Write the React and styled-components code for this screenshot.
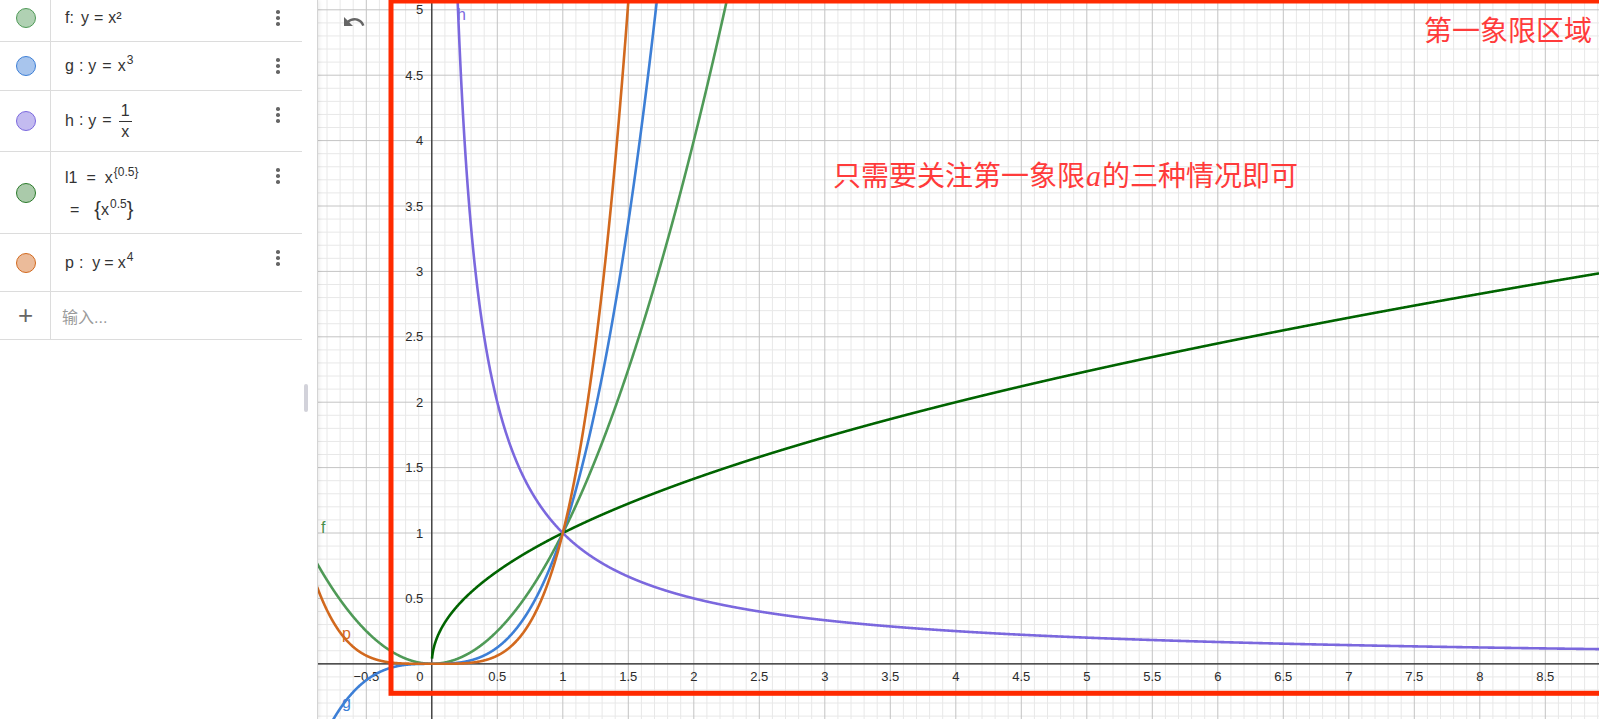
import React from 'react';
import styled, { createGlobalStyle } from 'styled-components';

const GlobalStyle = createGlobalStyle`
  html, body {
    margin: 0;
    padding: 0;
    height: 100%;
    overflow: hidden;
    background: #fff;
  }
  body {
    font-family: "Liberation Sans", "Noto Sans CJK SC", sans-serif;
    color: #333;
  }
  #root {
    height: 100%;
  }
`;

// graph view constants (px inside the graphics panel)
const W = 1282;
const H = 719;
const OX = 114.8;
const OY = 663.8;
const UX = 131;
const UY = 130.8;

const toPx = (x) => OX + x * UX;
const toPy = (y) => OY - y * UY;

const functions = [
  { id: 'f', color: '#4f9a57', fn: (x) => x * x },
  { id: 'l1', color: '#006400', fn: (x) => (x >= 0 ? Math.sqrt(x) : NaN) },
  { id: 'h', color: '#7b68de', fn: (x) => (x > 0 ? 1 / x : NaN) },
  { id: 'g', color: '#3d7fd6', fn: (x) => x * x * x },
  { id: 'p', color: '#d2691e', fn: (x) => x * x * x * x },
];

function buildPath(fn) {
  let d = '';
  let pen = false;
  for (let px = 0; px <= W; px += 0.25) {
    const x = (px - OX) / UX;
    let y = fn(x);
    if (!isFinite(y)) {
      pen = false;
      continue;
    }
    y = Math.max(-2, Math.min(7, y));
    d += `${pen ? 'L' : 'M'}${px.toFixed(2)} ${toPy(y).toFixed(2)} `;
    pen = true;
  }
  return d;
}

function gridLines() {
  const lines = [];
  const kx0 = Math.ceil(((0 - OX) / UX) * 10);
  const kx1 = Math.floor(((W - OX) / UX) * 10);
  for (let k = kx0; k <= kx1; k++) {
    const px = toPx(k / 10);
    lines.push({ key: 'x' + k, major: k % 5 === 0, x1: px, y1: 0, x2: px, y2: H });
  }
  const ky0 = Math.ceil(((OY - H) / UY) * 10);
  const ky1 = Math.floor((OY / UY) * 10);
  for (let k = ky0; k <= ky1; k++) {
    const py = toPy(k / 10);
    lines.push({ key: 'y' + k, major: k % 5 === 0, x1: 0, y1: py, x2: W, y2: py });
  }
  return lines;
}

const fmt = (v) => (v < 0 ? '\u2212' + String(-v) : String(v));

const xTicks = [];
for (let k = -1; k <= 17; k++) if (k !== 0) xTicks.push(k / 2);
const yTicks = [];
for (let k = 1; k <= 10; k++) yTicks.push(k / 2);

const rows = [
  { id: 'f', h: 48, color: '#4f9a57', fill: 'rgba(79,154,87,0.45)' },
  { id: 'g', h: 49, color: '#3d7fd6', fill: 'rgba(61,127,214,0.45)' },
  { id: 'h', h: 61, color: '#7b68de', fill: 'rgba(123,104,222,0.45)' },
  { id: 'l1', h: 82, color: '#2a7a2a', fill: 'rgba(42,122,42,0.4)' },
  { id: 'p', h: 58, color: '#d2691e', fill: 'rgba(210,105,30,0.45)' },
];

export default function App() {
  const grid = gridLines();
  return (
    <Layout>
      <GlobalStyle />
      <AlgebraPanel>
        <List>
          {rows.map((r) => (
            <Row key={r.id} h={r.h}>
              <MarbleCell>
                <Marble color={r.color} fill={r.fill} />
              </MarbleCell>
              <Content>{renderFormula(r.id)}</Content>
              <MenuButton>
                <Dot />
                <Dot />
                <Dot />
              </MenuButton>
            </Row>
          ))}
          <Row h={48}>
            <MarbleCell>
              <Plus>+</Plus>
            </MarbleCell>
            <Content>
              <Placeholder>输入...</Placeholder>
            </Content>
          </Row>
        </List>
        <DragHandle />
      </AlgebraPanel>

      <GraphPanel>
        <svg width={W} height={H} viewBox={`0 0 ${W} ${H}`}>
          <g>
            {grid
              .filter((l) => !l.major)
              .map((l) => (
                <line key={l.key} x1={l.x1} y1={l.y1} x2={l.x2} y2={l.y2} stroke="#e8e8e8" strokeWidth="1" />
              ))}
            {grid
              .filter((l) => l.major)
              .map((l) => (
                <line key={l.key} x1={l.x1} y1={l.y1} x2={l.x2} y2={l.y2} stroke="#c4c4c4" strokeWidth="1" />
              ))}
          </g>
          <line x1="0" y1={OY} x2={W} y2={OY} stroke="#252525" strokeWidth="1.2" />
          <line x1={OX} y1="0" x2={OX} y2={H} stroke="#252525" strokeWidth="1.2" />

          <g fontFamily="Liberation Sans, sans-serif" fontSize="13" fill="#2b2b2b">
            {xTicks.map((v) => (
              <text key={'xt' + v} x={toPx(v)} y={OY + 17} textAnchor="middle">
                {fmt(v)}
              </text>
            ))}
            <text x={OX - 12} y={OY + 17} textAnchor="middle">0</text>
            {yTicks.map((v) => (
              <text key={'yt' + v} x={OX - 8.5} y={toPy(v) + 4.6} textAnchor="end">
                {fmt(v)}
              </text>
            ))}
          </g>

          {functions.map((f) => (
            <path key={f.id} d={buildPath(f.fn)} fill="none" stroke={f.color} strokeWidth="2.6" strokeLinejoin="round" />
          ))}

          <g fontFamily="Liberation Sans, sans-serif" fontSize="16">
            <text x={140} y={20} fill="#7b68de">h</text>
            <text x={4} y={533} fill="#4a8f4a">f</text>
            <text x={25} y={639} fill="#d2691e">p</text>
            <text x={25} y={708} fill="#3d7fd6">g</text>
          </g>

          <rect x={74} y={1} width={2000} height={692.3} fill="none" stroke="#ff2a00" strokeWidth="5" />
        </svg>

        <UndoButton aria-label="undo">
          <svg width="24" height="24" viewBox="0 0 24 24">
            <path
              fill="#666"
              d="M12.5 8c-2.65 0-5.05.99-6.9 2.6L2 7v9h9l-3.62-3.62c1.39-1.16 3.16-1.88 5.12-1.88 3.54 0 6.55 2.31 7.6 5.5l2.37-.78C21.08 11.03 17.15 8 12.5 8z"
            />
          </svg>
        </UndoButton>

        <Note x={516} y={160}>
          只需要关注第一象限<MathA>a</MathA>的三种情况即可
        </Note>
        <Note x={1107} y={15}>第一象限区域</Note>
      </GraphPanel>
    </Layout>
  );
}

function renderFormula(id) {
  switch (id) {
    case 'f':
      return (
        <Formula>
          f:<Op l={7} r={0}>y</Op><Op l={5} r={5}>=</Op>x²
        </Formula>
      );
    case 'g':
      return (
        <Formula>
          g<Op l={5} r={5}>:</Op>y<Op l={6} r={6}>=</Op>x<sup>3</sup>
        </Formula>
      );
    case 'h':
      return (
        <Formula>
          h<Op l={5} r={5}>:</Op>y<Op l={6} r={6}>=</Op>
          <Frac>
            <span>1</span>
            <span>x</span>
          </Frac>
        </Formula>
      );
    case 'l1':
      return (
        <TwoLines>
          <Formula>
            l1<Op l={9} r={9}>=</Op>x<sup>{'{0.5}'}</sup>
          </Formula>
          <Formula>
            <Op l={5} r={5}>=</Op>
            <Op l={10} r={10}>
              <Brace>{'{'}</Brace>x<sup>0.5</sup><Brace>{'}'}</Brace>
            </Op>
          </Formula>
        </TwoLines>
      );
    case 'p':
      return (
        <Formula>
          p<Op l={5} r={5}>:</Op><Op l={4} r={4}>y</Op>=<Op l={4} r={0}>x</Op><sup>4</sup>
        </Formula>
      );
    default:
      return null;
  }
}

const Layout = styled.div`
  display: flex;
  width: 100%;
  height: 100vh;
`;

const AlgebraPanel = styled.aside`
  position: relative;
  z-index: 2;
  flex: none;
  width: 317px;
  height: 100%;
  background: #fff;
  box-shadow: 1px 0 0 #d4d4d4, 2px 0 4px rgba(0, 0, 0, 0.1);
`;

const List = styled.div`
  width: 302px;
  margin-top: -6px;
`;

const Row = styled.div`
  display: flex;
  box-sizing: border-box;
  height: ${(p) => p.h}px;
  border-bottom: 1px solid #dcdcdc;
`;

const MarbleCell = styled.div`
  flex: none;
  width: 51px;
  display: flex;
  align-items: center;
  justify-content: center;
  border-right: 1px solid #dcdcdc;
  padding-left: 1px;
  box-sizing: border-box;
`;

const Marble = styled.span`
  width: 20px;
  height: 20px;
  box-sizing: border-box;
  border-radius: 50%;
  border: 1.5px solid ${(p) => p.color};
  background: ${(p) => p.fill};
`;

const Plus = styled.span`
  font-size: 26px;
  font-weight: 300;
  color: #666;
  line-height: 1;
  margin-top: -2px;
`;

const Content = styled.div`
  flex: 1;
  display: flex;
  align-items: center;
  padding-left: 14px;
  font-size: 16px;
  color: #333;
`;

const TwoLines = styled.div`
  display: flex;
  flex-direction: column;
  gap: 9px;
  margin-top: 2px;
`;

const Formula = styled.div`
  white-space: nowrap;
  line-height: 22px;
  sup {
    font-size: 12px;
    vertical-align: 7px;
    line-height: 0;
    margin-left: 1px;
  }
`;

const Op = styled.span`
  margin-left: ${(p) => p.l}px;
  margin-right: ${(p) => p.r}px;
`;

const Frac = styled.span`
  display: inline-flex;
  flex-direction: column;
  align-items: center;
  vertical-align: middle;
  margin-left: 1px;
  line-height: 18px;
  span:first-child {
    border-bottom: 1px solid #333;
    padding: 0 2px 1px;
  }
  span:last-child {
    padding-top: 1px;
  }
`;

const Brace = styled.span`
  font-size: 20px;
  font-weight: 300;
  vertical-align: -1px;
`;

const MenuButton = styled.div`
  flex: none;
  width: 48px;
  height: 48px;
  display: flex;
  flex-direction: column;
  align-items: center;
  justify-content: center;
  gap: 2.6px;
`;

const Dot = styled.span`
  width: 3.6px;
  height: 3.6px;
  border-radius: 50%;
  background: #666;
`;

const Placeholder = styled.span`
  color: #9a9a9a;
  margin-left: -3px;
`;

const DragHandle = styled.div`
  position: absolute;
  left: 304px;
  top: 384px;
  width: 4px;
  height: 28px;
  border-radius: 2px;
  background: #d2d2da;
`;

const GraphPanel = styled.main`
  position: relative;
  flex: 1;
  height: 100%;
  overflow: hidden;
  background: #fff;
  svg {
    display: block;
  }
`;

const UndoButton = styled.div`
  position: absolute;
  left: 25px;
  top: 10px;
  width: 24px;
  height: 24px;
`;

const Note = styled.div`
  position: absolute;
  left: ${(p) => p.x}px;
  top: ${(p) => p.y}px;
  font-family: "Noto Sans CJK SC", sans-serif;
  font-size: 28px;
  line-height: 28px;
  color: #ff3b3b;
  white-space: nowrap;
`;

const MathA = styled.span`
  font-family: "Liberation Serif", serif;
  font-style: italic;
  font-size: 30px;
  margin: 0 1px;
`;
